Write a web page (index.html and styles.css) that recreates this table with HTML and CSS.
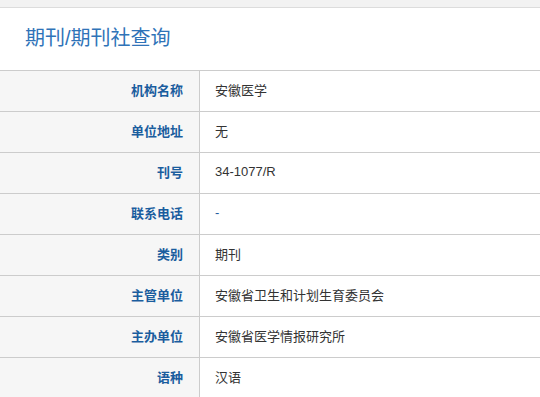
FILE: index.html
```html
<!DOCTYPE html>
<html lang="zh">
<head>
<meta charset="utf-8">
<link rel="stylesheet" href="styles.css">
</head>
<body>
<div class="topbar"></div>
<div class="panel">
  <h1 class="title">期刊/期刊社查询</h1>
  <table class="info">
    <tr><th>机构名称</th><td>安徽医学</td></tr>
    <tr><th>单位地址</th><td>无</td></tr>
    <tr><th>刊号</th><td>34-1077/R</td></tr>
    <tr><th>联系电话</th><td><a class="link" href="#">-</a></td></tr>
    <tr><th>类别</th><td>期刊</td></tr>
    <tr><th>主管单位</th><td>安徽省卫生和计划生育委员会</td></tr>
    <tr><th>主办单位</th><td>安徽省医学情报研究所</td></tr>
    <tr><th>语种</th><td>汉语</td></tr>
  </table>
</div>
</body>
</html>
```

FILE: styles.css
```css
html, body {
  margin: 0;
  padding: 0;
  background: #fff;
  font-family: "Liberation Sans", Arial, "Noto Sans CJK SC", sans-serif;
}
.topbar {
  height: 7px;
  background: #f2f2f2;
  border-bottom: 1px solid #dcdcdc;
  box-shadow: 0 1px 3px rgba(0,0,0,0.06);
}
.panel {
  background: #fff;
}
.title {
  margin: 0;
  padding: 17px 0 0 25px;
  height: 45px;
  box-sizing: content-box;
  font-size: 20px;
  line-height: 26px;
  font-weight: normal;
  color: #2f73b8;
}
.info {
  width: 100%;
  border-collapse: collapse;
  font-size: 13px;
}
.info tr {
  height: 41px;
}
.info th, .info td {
  border-top: 1px solid #cccccc;
  border-bottom: 1px solid #cccccc;
  padding: 0 0 4px 0;
  vertical-align: middle;
}
.info th {
  width: 183px;
  padding-right: 16px;
  text-align: right;
  background: #f6f6f6;
  color: #1a5d9e;
  font-weight: bold;
  border-right: 1px solid #cccccc;
}
.info td {
  padding-left: 15px;
  color: #333;
  text-align: left;
}
.link {
  color: #1a5d9e;
  text-decoration: none;
}
```
